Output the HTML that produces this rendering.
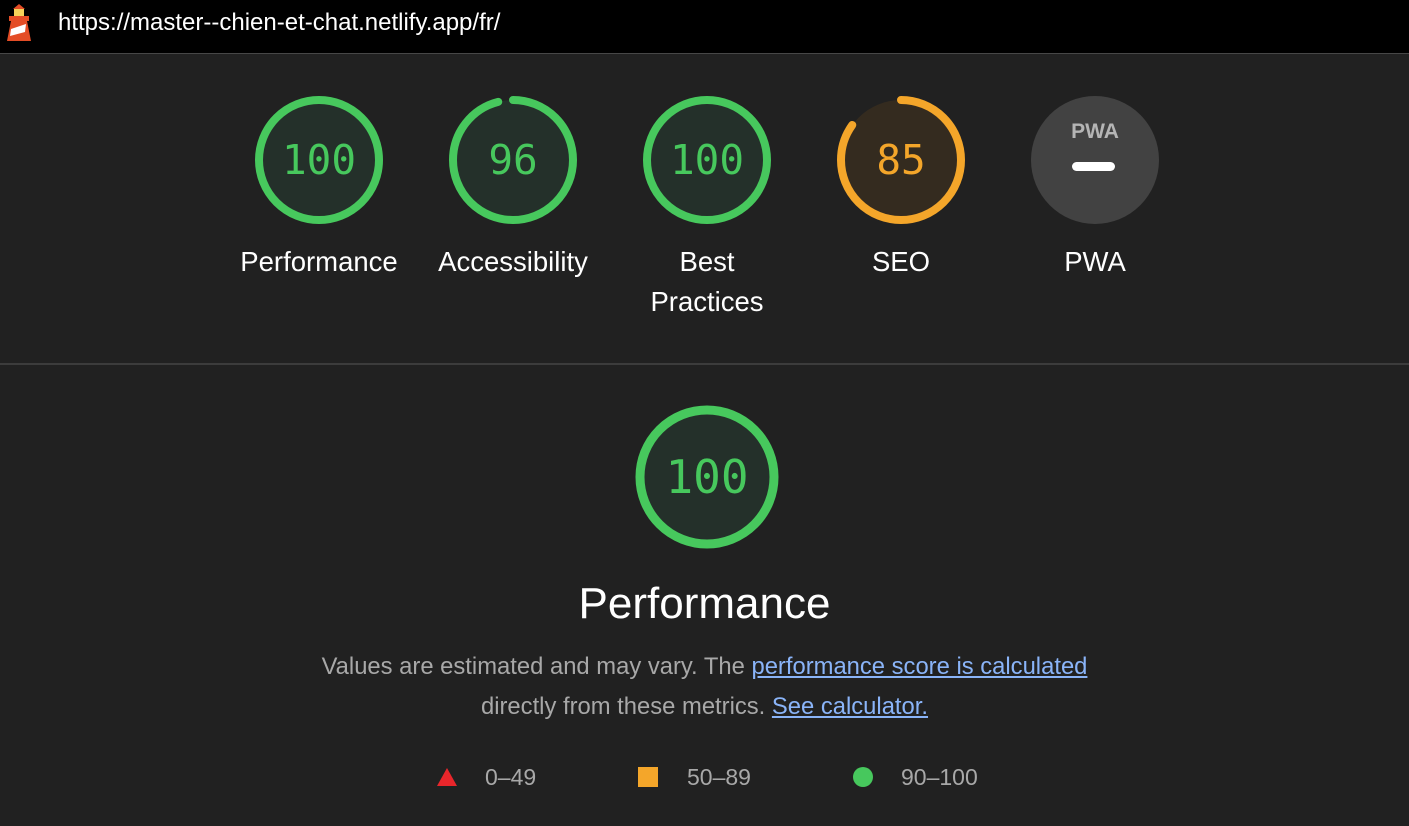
<!DOCTYPE html>
<html><head><style>
body{margin:0;width:1409px;height:826px;background:#212121;font-family:"Liberation Sans",sans-serif;overflow:hidden;position:relative}
.top{position:absolute;left:0;top:0;width:1409px;height:53px;background:#000;border-bottom:1px solid #474747}
.url{position:absolute;left:58px;top:9px;color:#fff;font-size:24px}
.g{position:absolute;width:194px;text-align:center;color:#fff;font-size:27.5px;line-height:40px}
.g svg{display:block;margin:0 auto 0}
.div{position:absolute;left:0;top:363px;width:1409px;height:2px;background:#3c3c3c}
.sc{font-family:"DejaVu Sans Mono",monospace}
a{color:#8ab4f8}
</style></head><body>
<div class="top">
<svg style="position:absolute;left:4px;top:4px" width="30" height="38" viewBox="0 0 30 38">
<rect x="10" y="5" width="10" height="8" fill="#f5d25a"/>
<path d="M9 5 L15 0 L21 5Z" fill="#e44d26"/>
<rect x="5" y="12" width="20" height="5" fill="#e44d26"/>
<path d="M7 17 H23 L27 37 H3Z" fill="#e44d26"/>
<path d="M7 25 L22 20 L21 28 L6 32Z" fill="#fff"/>
</svg>
<div class="url">https://master--chien-et-chat.netlify.app/fr/</div>
</div>

<div class="g" style="left:222px;top:94px">
<svg width="132" height="132" viewBox="0 0 132 132"><circle cx="66" cy="66" r="60" fill="#24302a" stroke="#47c85d" stroke-width="8"/><text x="66" y="80" text-anchor="middle" class="sc" font-size="41" fill="#47c85d">100</text></svg>
<div style="margin-top:16px">Performance</div></div>

<div class="g" style="left:416px;top:94px">
<svg width="132" height="132" viewBox="0 0 132 132"><circle cx="66" cy="66" r="60" fill="#24302a"/><circle cx="66" cy="66" r="60" fill="none" stroke="#47c85d" stroke-width="8" stroke-dasharray="361.9 377" transform="rotate(-90 66 66)" stroke-linecap="round"/><text x="66" y="80" text-anchor="middle" class="sc" font-size="41" fill="#47c85d">96</text></svg>
<div style="margin-top:16px">Accessibility</div></div>

<div class="g" style="left:610px;top:94px">
<svg width="132" height="132" viewBox="0 0 132 132"><circle cx="66" cy="66" r="60" fill="#24302a" stroke="#47c85d" stroke-width="8"/><text x="66" y="80" text-anchor="middle" class="sc" font-size="41" fill="#47c85d">100</text></svg>
<div style="margin-top:16px">Best<br>Practices</div></div>

<div class="g" style="left:804px;top:94px">
<svg width="132" height="132" viewBox="0 0 132 132"><circle cx="66" cy="66" r="60" fill="#342b1f"/><circle cx="66" cy="66" r="60" fill="none" stroke="#f4a62a" stroke-width="8" stroke-dasharray="320 377" transform="rotate(-90 66 66)" stroke-linecap="round"/><text x="66" y="80" text-anchor="middle" class="sc" font-size="41" fill="#f4a62a">85</text></svg>
<div style="margin-top:16px">SEO</div></div>

<div class="g" style="left:998px;top:94px">
<svg width="132" height="132" viewBox="0 0 132 132"><circle cx="66" cy="66" r="64" fill="#424242"/><text x="66" y="44" text-anchor="middle" font-family="Liberation Sans" font-weight="bold" font-size="21" fill="#b5b5b5">PWA</text><rect x="43" y="68" width="43" height="9" rx="4.5" fill="#fff"/></svg>
<div style="margin-top:16px">PWA</div></div>

<div class="div"></div>

<svg style="position:absolute;left:634px;top:404px" width="146" height="146" viewBox="0 0 146 146"><circle cx="73" cy="73" r="67" fill="#24302a" stroke="#47c85d" stroke-width="9"/><text x="73" y="89" text-anchor="middle" class="sc" font-size="46" fill="#47c85d">100</text></svg>

<div style="position:absolute;left:0;width:1409px;top:579px;text-align:center;color:#fff;font-size:44px">Performance</div>
<div style="position:absolute;left:0;width:1409px;top:647px;text-align:center;color:#a8a8a8;font-size:23.8px;line-height:40px">Values are estimated and may vary. The <a href="#">performance score is calculated</a><br>directly from these metrics. <a href="#">See calculator.</a></div>

<div style="position:absolute;top:764px;left:0;width:1409px;color:#a8a8a8;font-size:23px">
<svg style="position:absolute;left:437px;top:4px" width="20" height="18"><path d="M10 0 L20 18 H0Z" fill="#e9262b"/></svg>
<span style="position:absolute;left:485px;top:0">0–49</span>
<div style="position:absolute;left:638px;top:3px;width:20px;height:20px;background:#f4a62a"></div>
<span style="position:absolute;left:687px;top:0">50–89</span>
<div style="position:absolute;left:853px;top:3px;width:20px;height:20px;border-radius:50%;background:#47c85d"></div>
<span style="position:absolute;left:901px;top:0">90–100</span>
</div>
</body></html>
